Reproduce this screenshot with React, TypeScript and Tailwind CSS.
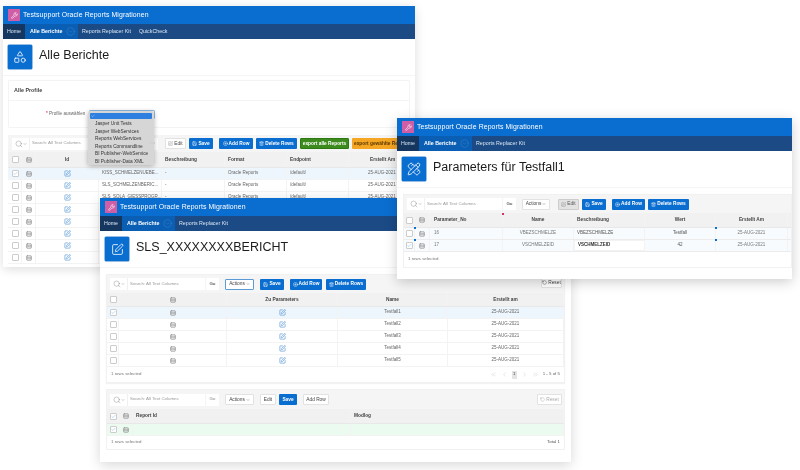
import type { ReactNode } from "react"
import { ChevronDown, ChevronLeft, ChevronRight, ChevronsLeft, ChevronsRight, CircleChevronDown, CirclePlus, Check, PencilRuler, RotateCcw, Rows3, Save, Search, Shapes, SquarePen, Trash2, Wrench } from "lucide-react"

const sans = "font-['Liberation_Sans',Arial,sans-serif]"

function Chrome({ nav }: { nav: string[] }) {
  return (
    <>
      <div className="h-[18px] bg-[#0a6ed1] flex items-center pl-[5px] gap-[2px]">
        <div className="w-[12px] h-[12px] bg-[#cf5ea6] flex items-center justify-center">
          <Wrench size={7} color="white" />
        </div>
        <span className="text-[6.9px] text-white tracking-[0.1px] ml-[1px]">Testsupport Oracle Reports Migrationen</span>
      </div>
      <div className="h-[15px] bg-[#1b4a85] flex items-center text-[5.3px] text-[#dbe6f3]">
        <div className="h-full w-[22px] bg-[#14365f] flex items-center justify-center">Home</div>
        <div className="h-full w-[53px] bg-[#0a5fb4] flex items-center pl-[5px] gap-[2px] font-bold text-white">
          Alle Berichte
          <CircleChevronDown size={9} strokeWidth={1} color="#4c8fd6" className="ml-[2px]" />
        </div>
        {nav.map((n) => (
          <span key={n} className="ml-[4px] mr-[4px]">{n}</span>
        ))}
      </div>
    </>
  )
}

function Hero({ title, icon }: { title: string; icon: ReactNode }) {
  return (
    <div className="h-[37px] flex pl-[5px] pt-[6px] gap-[7px] bg-white border-b border-[#f5f5f5]">
      <div className="w-[24px] h-[24px] bg-[#0a6ed1] rounded-[1px] shadow-[0_0_0_0.5px_#2f7fcc] flex items-center justify-center text-white">{icon}</div>
      <h1 className="text-[12.5px] leading-[17px] mt-[1.5px] text-[#1c1c1c]">{title}</h1>
    </div>
  )
}

function Btn({ children, className }: { children: ReactNode; className: string }) {
  return <div className={"h-[11px] flex items-center justify-center gap-[1px] rounded-[1px] text-[4.8px] whitespace-nowrap overflow-hidden shrink-0 " + className}>{children}</div>
}

const white = "bg-white border border-[#e2e2e2] text-[#444444]"
const blue = "bg-[#0a6ed1] text-white font-bold"

function SearchBar({ w, faded }: { w: string; faded?: boolean }) {
  return (
    <div className={"flex items-center h-[12px] shrink-0 text-[4.4px] " + (faded ? "text-[#aaaaaa]" : "text-[#666666]")}>
      <div className="w-[17px] h-full bg-white flex items-center justify-center text-[#666666]">
        <Search size={8} strokeWidth={1} />
        <ChevronDown size={4} />
      </div>
      <div className={"h-full bg-white flex items-center pl-[2px] border-l border-[#f0f0f0] text-[#999999] " + w}>Search: All Text Columns</div>
      <div className="w-[13px] h-full bg-white ml-[1px] flex items-center justify-center font-bold">Go</div>
    </div>
  )
}

function Box({ on }: { on?: boolean }) {
  return (
    <div className="w-[7px] h-[7px] bg-white border border-[#cccccc] rounded-[1px] flex items-center justify-center">
      {on && <Check size={5} strokeWidth={1.5} color="#3a8ad6" />}
    </div>
  )
}

function Grip() {
  return <Rows3 size={6} strokeWidth={2.6} color="#888888" />
}

function Edit() {
  return <SquarePen size={7} strokeWidth={1.8} color="#2f7fcc" />
}

function Cell({ children, className = "" }: { children?: ReactNode; className?: string }) {
  return <div className={"flex items-center min-w-0 overflow-hidden whitespace-nowrap border-r border-[#f3f3f3] " + className}>{children}</div>
}

function WindowAlle() {
  const rows = [
    ["KISS_SCHMELZENUEBE...", true],
    ["SLS_SCHMELZENBERIC...", false],
    ["SLS_SOLA_GIESSPROGR...", false],
    ["", false],
    ["", false],
    ["", false],
    ["", false],
    ["", false],
  ] as const
  const cols = "grid grid-cols-[14px_14px_63px_63px_63px_62px_62px_61px]"
  return (
    <div className="absolute left-[3px] top-[6px] w-[412px] h-[261px] bg-white shadow-[0_2px_10px_rgba(0,0,0,0.14)] overflow-hidden">
      <Chrome nav={["Reports Replacer Kit", "QuickCheck"]} />
      <Hero title="Alle Berichte" icon={<Shapes size={14} strokeWidth={1.4} />} />
      <div className="mx-[5px] mt-[4px] h-[48px] border border-[#f4f4f4] rounded-[1px]">
        <div className="h-[20px] border-b border-[#f4f4f4] pl-[5px] flex items-center text-[5.4px] font-bold text-[#444444]">Alle Profile</div>
        <div className="h-[27px] flex items-center pl-[37px] gap-[4px] text-[4.6px] text-[#666666]">
          <span><span className="text-[#d0021b]">* </span>Profile auswählen</span>
          <div className="w-[66px] h-[9px] bg-white border border-[#8fbce8] rounded-[1px]" />
        </div>
      </div>
      <div className="mx-[5px] mt-[7px]">
        <div className="h-[17px] bg-[#f5f5f5] flex items-center pl-[4px] gap-[3px]">
          <SearchBar w="w-[115px]" />
          <Btn className={white + " w-[21px] ml-[4px]"}><SquarePen size={5} strokeWidth={1.2} />Edit</Btn>
          <Btn className={blue + " w-[24px]"}><Save size={5} />Save</Btn>
          <Btn className={blue + " w-[34px] ml-[3px]"}><CirclePlus size={5} />Add Row</Btn>
          <Btn className={blue + " w-[41px]"}><Trash2 size={5} />Delete Rows</Btn>
          <Btn className="w-[49px] bg-[#3d8b1f] text-white font-bold border border-[#2e7a12]">export alle Reports</Btn>
          <Btn className="w-[60px] bg-[#f5a623] text-[#5a3a00] font-bold">export gewählte Reports</Btn>
        </div>
        <div className={cols + " h-[16px] bg-[#f1f1f1] border-b border-[#e8e8e8] text-[4.8px] font-bold text-[#444444]"}>
          <Cell className="justify-center pl-[1px]"><Box /></Cell>
          <Cell className="justify-center"><Grip /></Cell>
          <Cell className="justify-center">Id</Cell>
          <Cell />
          <Cell className="pl-[3px]">Beschreibung</Cell>
          <Cell className="pl-[3px]">Format</Cell>
          <Cell className="pl-[3px]">Endpoint</Cell>
          <Cell className="pl-[21px]">Erstellt Am</Cell>
        </div>
        {rows.map(([name, on], i) => (
          <div key={i} className={cols + " h-[12px] border-b border-[#f3f3f3] text-[4.5px] text-[#666666] " + (on ? "bg-[#eef6fd]" : "bg-white")}>
            <Cell className="justify-center pl-[1px]"><Box on={on} /></Cell>
            <Cell className="justify-center"><Grip /></Cell>
            <Cell className="justify-center"><Edit /></Cell>
            <Cell className="pl-[3px]">{name}</Cell>
            <Cell className="pl-[3px]">{name && "-"}</Cell>
            <Cell className="pl-[3px]">{name && "Oracle Reports"}</Cell>
            <Cell className="pl-[3px]">{name && "/default/"}</Cell>
            <Cell className="pl-[19px]">{name && "25-AUG-2021"}</Cell>
          </div>
        ))}
      </div>
      <div className="absolute left-[85px] top-[105px] w-[66px] h-[54px] bg-[#d4d4d4]/95 rounded-[2px] shadow-[0_1px_5px_rgba(0,0,0,0.3)] p-[2px] text-[4.8px] text-[#333333]">
        <div className="h-[6px] bg-[#2f7fe0] rounded-[1px] flex items-center pl-[1px] text-white"><Check size={4} /></div>
        <div className="pl-[5px] pt-[1px] flex flex-col leading-[7.5px]">
          <span>Jasper Unit Tests</span>
          <span>Jasper WebServices</span>
          <span>Reports WebServices</span>
          <span>Reports Commandline</span>
          <span>BI Publisher-WebService</span>
          <span>BI Publisher-Data XML</span>
        </div>
      </div>
    </div>
  )
}

function WindowBericht() {
  const cols = "grid grid-cols-[12px_108px_111px_110px_116px]"
  const cols2 = "grid grid-cols-[12px_14px_218px_213px]"
  return (
    <div className="absolute left-[100px] top-[198px] w-[471px] h-[264px] bg-white shadow-[0_3px_12px_rgba(0,0,0,0.16)]">
      <Chrome nav={["Reports Replacer Kit"]} />
      <Hero title="SLS_XXXXXXXXBERICHT" icon={<SquarePen size={13} strokeWidth={1.5} />} />
      <div className="mx-[6px] mt-[6px] border border-[#f1f1f1] shadow-[0_1px_1px_rgba(0,0,0,0.05)]">
        <div className="h-[18px] bg-[#f5f5f5] flex items-center pl-[3px] gap-[6px]">
          <SearchBar w="w-[78px]" />
          <Btn className="w-[29px] bg-white border border-[#5b9bd8] text-[#444444]">Actions<ChevronDown size={4} /></Btn>
          <Btn className={blue + " w-[24px]"}><Save size={5} />Save</Btn>
          <Btn className={blue + " w-[32px]"}><CirclePlus size={5} />Add Row</Btn>
          <Btn className={blue + " w-[40px] -ml-[2px]"}><Trash2 size={5} />Delete Rows</Btn>
          <Btn className={white + " w-[21px] ml-auto mr-[2px] -mt-[3px]"}><RotateCcw size={5} />Reset</Btn>
        </div>
        <div className={cols + " h-[14px] bg-[#f1f1f1] border-b border-[#e8e8e8] text-[4.8px] font-bold text-[#444444]"}>
          <Cell className="justify-center pl-[1px]"><Box /></Cell>
          <Cell className="justify-center"><Grip /></Cell>
          <Cell className="justify-center">Zu Parameters</Cell>
          <Cell className="justify-center">Name</Cell>
          <Cell className="justify-center">Erstellt am</Cell>
        </div>
        {[1, 2, 3, 4, 5].map((n) => (
          <div key={n} className={cols + " h-[12px] border-b border-[#f3f3f3] text-[4.5px] text-[#666666] " + (n === 1 ? "bg-[#eef6fd]" : "bg-white")}>
            <Cell className="justify-center pl-[1px]"><Box on={n === 1} /></Cell>
            <Cell className="justify-center"><Grip /></Cell>
            <Cell className="justify-center"><Edit /></Cell>
            <Cell className="justify-center">Testfall{n}</Cell>
            <Cell className="justify-center">25-AUG-2021</Cell>
          </div>
        ))}
        <div className="h-[15px] flex items-center px-[4px] text-[4.4px] text-[#777777]">
          <span>1 rows selected</span>
          <div className="ml-auto flex items-center gap-[4px] text-[#aaaaaa]">
            <ChevronsLeft size={7} strokeWidth={1} />
            <ChevronLeft size={7} strokeWidth={1} />
            <span className="w-[5px] h-[8px] bg-[#e4e4e4] text-[#444444] flex items-center justify-center">1</span>
            <ChevronRight size={7} strokeWidth={1} />
            <ChevronsRight size={7} strokeWidth={1} />
            <span className="text-[#666666]">1 - 5 of 5</span>
          </div>
        </div>
      </div>
      <div className="mx-[6px] mt-[6px] border border-[#f1f1f1]">
        <div className="h-[19px] bg-[#f5f5f5] flex items-center pl-[3px] gap-[6px]">
          <SearchBar w="w-[78px]" faded />
          <Btn className={white + " w-[29px]"}>Actions<ChevronDown size={4} /></Btn>
          <Btn className={white + " w-[16px]"}>Edit</Btn>
          <Btn className={blue + " w-[18px] -ml-[3px]"}>Save</Btn>
          <Btn className={white + " w-[26px]"}>Add Row</Btn>
          <Btn className={white + " w-[25px] ml-auto mr-[2px] text-[#aaaaaa]"}><RotateCcw size={5} />Reset</Btn>
        </div>
        <div className={cols2 + " h-[15px] bg-[#f1f1f1] border-b border-[#e8e8e8] text-[4.8px] font-bold text-[#444444]"}>
          <Cell className="justify-center pl-[1px]"><Box on /></Cell>
          <Cell className="justify-center"><Grip /></Cell>
          <Cell className="pl-[3px]">Report Id</Cell>
          <Cell className="pl-[3px]">Modlog</Cell>
        </div>
        <div className={cols2 + " h-[12px] bg-[#ebfbf0] border-b border-[#f3f3f3]"}>
          <Cell className="justify-center pl-[1px]"><Box on /></Cell>
          <Cell className="justify-center"><Grip /></Cell>
          <Cell />
          <Cell />
        </div>
        <div className="h-[13px] flex items-center justify-between px-[4px] text-[4.4px] text-[#777777]">
          <span>1 rows selected</span>
          <span className="text-[#555555]">Total 1</span>
        </div>
      </div>
    </div>
  )
}

function Marker({ className }: { className: string }) {
  return <span className={"absolute w-[2px] h-[2px] " + className} />
}

function WindowParameters() {
  const cols = "grid grid-cols-[11px_15px_73px_71px_71px_71px_72px]"
  return (
    <div className="absolute left-[397px] top-[118px] w-[395px] h-[161px] bg-white shadow-[0_3px_12px_rgba(0,0,0,0.2)]">
      <Chrome nav={["Reports Replacer Kit"]} />
      <Hero title="Parameters für Testfall1" icon={<PencilRuler size={14} strokeWidth={1.4} />} />
      <div className="ml-[6px] mt-[6px] border border-[#f1f1f1] relative">
        <div className="h-[18px] bg-[#f5f5f5] flex items-center pl-[3px] gap-[6px]">
          <SearchBar w="w-[78px]" />
          <Btn className={white + " w-[28px]"}>Actions<ChevronDown size={4} /></Btn>
          <Btn className="w-[21px] ml-[2px] bg-[#e2e2e2] border border-[#cccccc] text-[#555555]"><SquarePen size={5} strokeWidth={1.2} />Edit</Btn>
          <Btn className={blue + " w-[24px] -ml-[3px]"}><Save size={5} />Save</Btn>
          <Btn className={blue + " w-[33px]"}><CirclePlus size={5} />Add Row</Btn>
          <Btn className={blue + " w-[41px] -ml-[3px]"}><Trash2 size={5} />Delete Rows</Btn>
        </div>
        <div className={cols + " h-[15px] bg-[#f1f1f1] border-b border-[#e8e8e8] text-[4.8px] font-bold text-[#444444]"}>
          <Cell className="justify-center"><Box /></Cell>
          <Cell className="justify-center"><Grip /></Cell>
          <Cell className="pl-[4px]">Parameter_No</Cell>
          <Cell className="justify-center">Name</Cell>
          <Cell className="pl-[3px]">Beschreibung</Cell>
          <Cell className="justify-center">Wert</Cell>
          <Cell className="justify-center">Erstellt Am</Cell>
        </div>
        <div className={cols + " h-[12px] bg-[#f7fbfe] border-b border-[#ececec] text-[4.5px] text-[#777777]"}>
          <Cell className="justify-center"><Box /></Cell>
          <Cell className="justify-center"><Grip /></Cell>
          <Cell className="pl-[4px]">16</Cell>
          <Cell className="justify-center">VBEZSCHMELZE</Cell>
          <Cell className="pl-[3px] text-[#555555]">VBEZSCHMELZE</Cell>
          <Cell className="justify-center text-[#555555]">Testfall</Cell>
          <Cell className="justify-center">25-AUG-2021</Cell>
        </div>
        <div className={cols + " h-[12px] bg-[#f7fbfe] border-b border-[#ececec] text-[4.5px] text-[#777777]"}>
          <Cell className="justify-center"><Box on /></Cell>
          <Cell className="justify-center"><Grip /></Cell>
          <Cell className="pl-[4px]">17</Cell>
          <Cell className="justify-center">VSCHMELZEID</Cell>
          <Cell className="pl-[3px] bg-white border border-[#2f7fcc] font-bold text-[#333333]">VSCHMELZEID</Cell>
          <Cell className="justify-center text-[#555555]">42</Cell>
          <Cell className="justify-center">25-AUG-2021</Cell>
        </div>
        <div className="h-[15px] flex items-center pl-[4px] text-[4.4px] text-[#777777]">1 rows selected</div>
        <Marker className="left-[98px] top-[18px] bg-[#d6336c]" />
        <Marker className="left-[10px] top-[32px] bg-[#0a6ed1]" />
        <Marker className="left-[10px] top-[44px] bg-[#0a6ed1]" />
        <Marker className="left-[311px] top-[32px] bg-[#0a6ed1]" />
        <Marker className="left-[311px] top-[44px] bg-[#0a6ed1]" />
      </div>
    </div>
  )
}

export default function App() {
  return (
    <div className={"relative w-[800px] h-[470px] overflow-hidden bg-white blur-[0.3px] " + sans}>
      <WindowAlle />
      <WindowBericht />
      <WindowParameters />
    </div>
  )
}
